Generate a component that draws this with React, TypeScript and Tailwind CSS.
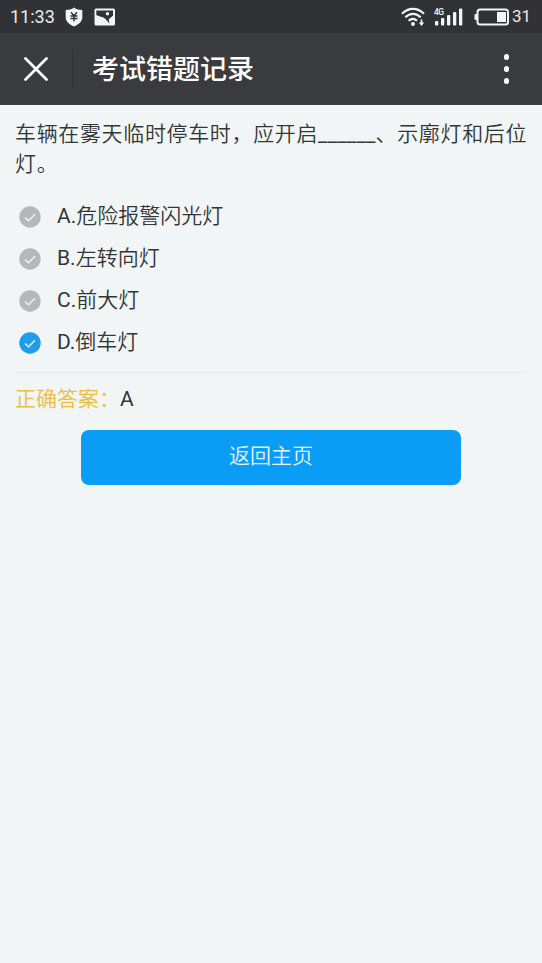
import React from 'react';

interface Option {
  id: string;
  label: string;
}

const OPTIONS: Option[] = [
  { id: 'A', label: '危险报警闪光灯' },
  { id: 'B', label: '左转向灯' },
  { id: 'C', label: '前大灯' },
  { id: 'D', label: '倒车灯' },
];

const SELECTED = 'D';
const ANSWER = 'A';

const StatusBar: React.FC = () => (
  <div className="flex h-[33px] items-center justify-between bg-[#313235] pl-[10px] pr-[11px] text-[#e9e9ea]">
    <div className="flex items-center">
      <span className="w-[55px] text-[18px] leading-none">11:33</span>
      <svg className="h-[20px] w-[18px]" viewBox="0 0 18 20">
        <path d="M9 .5C11.500 2.300 14 3 17.300 3v7.500c0 4-3.500 6.800-8.300 9-4.800-2.200-8.300-5-8.300-9V3C4 3 6.500 2.300 9 .5z" fill="#f4f4f4" />
        <path d="M6 5.300l3 3.500 3-3.500M9 8.800v5.700M5.500 9h7M5.500 11.500h7" fill="none" stroke="#313235" strokeWidth="1.400" />
      </svg>
      <svg className="ml-[11px] h-[18px] w-[22px]" viewBox="0 0 22 18">
        <rect x=".5" y=".5" width="20.500" height="17" rx="1.500" fill="#f4f4f4" />
        <path d="M2.300 2.500h16.700v5.300l-3.500 2.700-.8 1 .8 4.300-3.700-4.600C8.500 8 5 9 2.300 7z" fill="#313235" />
        <circle cx="13.500" cy="5.800" r="1.700" fill="#f4f4f4" />
      </svg>
    </div>
    <div className="flex items-center">
      <svg className="h-[20px] w-[24px]" viewBox="0 0 24 20" fill="none" stroke="#f4f4f4" strokeWidth="2.200">
        <path d="M1 6.800C7.500.2 16.500.2 23 6.800M4.300 10.300c4.700-4.700 10.700-4.700 15.400 0M7.700 13.800c2.600-2.500 5.700-2.500 8.300 0" />
        <circle cx="12" cy="16.900" r="2" fill="#f4f4f4" stroke="none" />
        <path d="M20.500 12.500v5" strokeWidth="1.600" />
        <path d="M17.800 15.500h5.400l-2.700 3.500z" fill="#f4f4f4" stroke="none" />
      </svg>
      <svg className="ml-[9px] h-[20px] w-[30px]" viewBox="0 0 30 20" fill="#f4f4f4">
        <text x="0" y="7.500" fontSize="8.500" fontWeight="500" fontFamily="Roboto, sans-serif" textLength="10">4G</text>
        <rect x="1" y="14" width="3.300" height="4.500" rx="1" />
        <rect x="7" y="11" width="3.300" height="7.500" rx="1" />
        <rect x="13" y="8" width="3.300" height="10.500" rx="1" />
        <rect x="19" y="5" width="3.300" height="13.500" rx="1" />
        <rect x="25" y="1.500" width="3.300" height="17" rx="1" />
      </svg>
      <svg className="ml-[10px] h-[18px] w-[36px]" viewBox="0 0 36 18">
        <rect x="3.500" y="1.500" width="30.500" height="15" rx="2.500" fill="none" stroke="#f4f4f4" strokeWidth="2" />
        <rect x=".5" y="6" width="3" height="6" rx="1" fill="#f4f4f4" />
        <rect x="23" y="4" width="9" height="10" fill="#f4f4f4" />
      </svg>
      <span className="ml-[2px] text-[17px] leading-none">31</span>
    </div>
  </div>
);

const TitleBar: React.FC = () => (
  <header className="flex h-[72px] items-center bg-[#3a3b3e] text-white">
    <button className="flex w-[72px] items-center justify-center" aria-label="关闭">
      <svg className="h-[24px] w-[24px]" viewBox="0 0 24 24" fill="none" stroke="currentColor" strokeWidth="2.700" strokeLinecap="round">
        <path d="M1.500 1.500l21 21M22.500 1.500l-21 21" />
      </svg>
    </button>
    <div className="h-[38px] w-px bg-[#303134]" />
    <h1 className="ml-[19px] flex-1 pt-[3px] text-[27px] leading-none font-medium">考试错题记录</h1>
    <button className="mr-[33px] flex flex-col gap-[6.500px]" aria-label="更多">
      <span className="size-[5.500px] rounded-full bg-white" />
      <span className="size-[5.500px] rounded-full bg-white" />
      <span className="size-[5.500px] rounded-full bg-white" />
    </button>
  </header>
);

const OptionRow: React.FC<{ option: Option; selected: boolean }> = ({ option, selected }) => (
  <li className="flex h-[42.150px] items-center">
    <svg className={`mt-[2px] ml-[4px] size-[22px] ${selected ? 'text-[#1f9ceb]' : 'text-[#b5b8b9]'}`} viewBox="0 0 22 22">
      <circle cx="11" cy="11" r="10.700" fill="currentColor" />
      <path d="M6 11.500l3.500 3.300 6.500-6.500" fill="none" stroke="#edf3f5" strokeWidth="1.500" />
    </svg>
    <span className="ml-[16px] text-[21px] leading-none">
      <span className="font-normal">{option.id}.</span>
      {option.label}
    </span>
  </li>
);

const App: React.FC = () => (
  <div className="min-h-screen w-full bg-[#f1f5f6] font-['Roboto','Noto_Sans_CJK_SC',sans-serif] text-[#333536]">
    <StatusBar />
    <TitleBar />
    <main className="px-[15px] pt-[14px] font-[350]">
      <p className="-mr-[4px] text-[21px] leading-[30px] tracking-[0.65px]">
        车辆在雾天临时停车时，应开启<span className="font-normal tracking-[0.100px]">______</span>、示廓灯和后位灯。
      </p>
      <ul className="mt-[16px]">
        {OPTIONS.map((option) => (
          <OptionRow key={option.id} option={option} selected={option.id === SELECTED} />
        ))}
      </ul>
      <div className="mt-[8px] h-px bg-[#e3e7e9]" />
      <p className="mt-[11px] text-[21px] leading-[30px]">
        <span className="text-[#edbd3c]">正确答案：</span>
        <span className="font-normal">{ANSWER}</span>
      </p>
      <button className="mx-auto mt-[16px] flex h-[55px] w-[380px] items-start justify-center rounded-[8px] bg-[#0b9cf5] pt-[11px] text-[21px] leading-[30px] text-[#e0f5ff]">
        返回主页
      </button>
    </main>
  </div>
);

export default App;
